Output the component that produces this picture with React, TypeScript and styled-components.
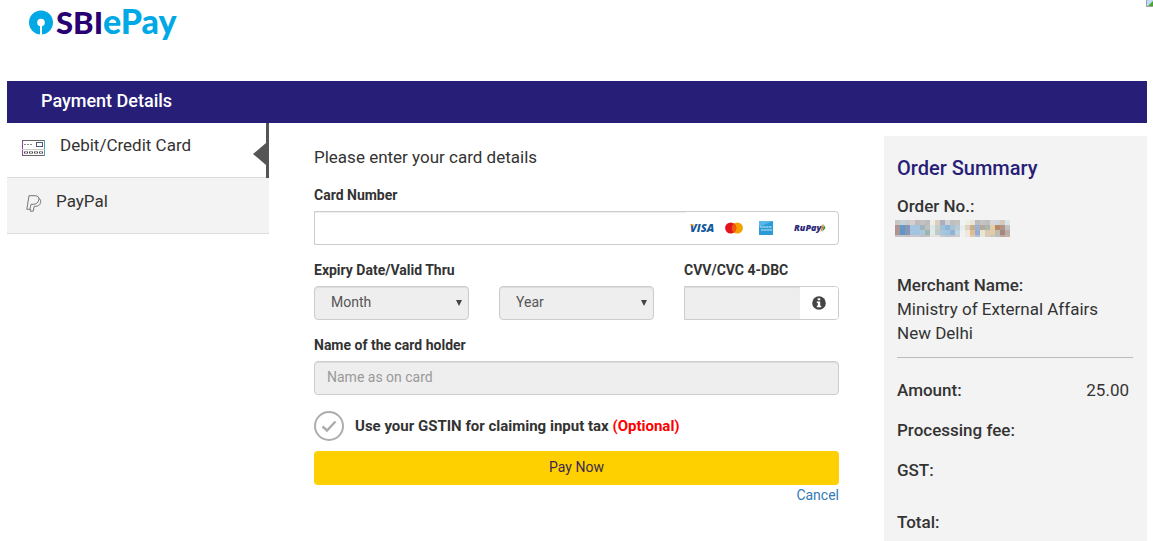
import React from "react";
import styled, { createGlobalStyle } from "styled-components";

const GlobalStyle = createGlobalStyle`
  * { box-sizing: border-box; }
  body {
    margin: 0;
    background: #fff;
    color: #333;
    font-family: Roboto, "Liberation Sans", sans-serif;
    font-size: 14px;
    line-height: 20px;
  }
  button, input, select { font: inherit; }
`;

const Page = styled.div`
  display: flex;
  flex-direction: column;
  min-height: 100vh;
  padding: 0 6px 0 7px;
`;

const Header = styled.header`
  position: relative;
  height: 81px;
  padding: 0 0 0 21px;
`;

const MissingImage = styled.svg`
  position: absolute;
  top: 0;
  right: -6px;
`;

const TitleBar = styled.h1`
  margin: 0;
  padding: 8px 34px 10px;
  background: #271e78;
  color: #fff;
  font-size: 18px;
  line-height: 24px;
  font-weight: 500;
`;

const Columns = styled.main`
  flex: 1;
  display: grid;
  grid-template-columns: minmax(0, 262fr) minmax(0, 525fr) minmax(0, 263fr);
  column-gap: 45px;
`;

const Methods = styled.nav`
  display: flex;
  flex-direction: column;
`;

const Method = styled.a<{ $active?: boolean; $indent: number; $gap: number }>`
  position: relative;
  display: flex;
  align-items: center;
  gap: ${(p) => p.$gap}px;
  height: ${(p) => (p.$active ? 55 : 56)}px;
  padding: 0 0 10px ${(p) => p.$indent}px;
  background: ${(p) => (p.$active ? "#fff" : "#f3f3f3")};
  border-bottom: 1px solid #ddd;
  color: #333;
  font-size: 17px;
  text-decoration: none;

  svg { margin-top: 5px; }

  ${(p) =>
    p.$active &&
    `
    &::before {
      content: "";
      position: absolute;
      top: 0;
      right: 0;
      bottom: -1px;
      width: 3px;
      background: #555;
    }
    &::after {
      content: "";
      position: absolute;
      top: 20px;
      right: 3px;
      border: solid transparent;
      border-width: 11px 13px 11px 0;
      border-right-color: #555;
    }
  `}
`;

const Form = styled.form`
  padding-top: 24px;
`;

const Intro = styled.p`
  margin: 0 0 18px;
  font-size: 17px;
`;

const Field = styled.div`
  display: flex;
  flex-direction: column;
  gap: 6px;
  margin-bottom: 15px;
`;

const FieldRow = styled.div`
  display: grid;
  grid-template-columns: repeat(3, minmax(0, 1fr));
  column-gap: 30px;
  align-items: end;
`;

const Label = styled.label`
  font-weight: 700;
`;

const ControlGroup = styled.div`
  display: flex;
  height: 34px;
  border: 1px solid #ccc;
  border-radius: 0 4px 4px 0;
  overflow: hidden;
`;

const BareInput = styled.input<{ $grey?: boolean }>`
  flex: 1;
  min-width: 0;
  border: 0;
  padding: 6px 12px;
  background: ${(p) => (p.$grey ? "#eee" : "#fff")};
  box-shadow: inset 0 1px 1px rgba(0, 0, 0, 0.075);
  color: #555;
`;

const CardBrands = styled.div`
  display: grid;
  grid-template-columns: 32px 32px 32px 56px;
  align-items: center;
  justify-items: center;
`;

const InfoButton = styled.button`
  display: flex;
  align-items: center;
  justify-content: center;
  width: 38px;
  padding: 0;
  border: 0;
  background: #fff;
`;

const TextInput = styled.input`
  height: 34px;
  padding: 5px 12px 7px;
  border: 1px solid #ccc;
  border-radius: 4px;
  background: #eee;
  box-shadow: inset 0 1px 1px rgba(0, 0, 0, 0.075);
  color: #555;
  &::placeholder { color: #999; opacity: 1; }
`;

const SelectBox = styled.div`
  position: relative;
  display: flex;
  &::after {
    content: "";
    position: absolute;
    top: 14px;
    right: 7px;
    border: solid transparent;
    border-width: 6px 3px 0;
    border-top-color: #444;
    pointer-events: none;
  }
`;

const Select = styled.select`
  appearance: none;
  width: 100%;
  height: 34px;
  padding: 5px 16px 7px;
  border: 1px solid #ccc;
  border-radius: 4px;
  background: #eee;
  box-shadow: inset 0 1px 1px rgba(0, 0, 0, 0.075);
  color: #555;
`;

const GstLabel = styled.label`
  display: flex;
  align-items: center;
  gap: 11px;
  margin: 16px 0 10px;
  font-size: 15px;
  font-weight: 700;
`;

const GstTick = styled.span`
  position: relative;
  display: flex;
  svg { position: absolute; inset: 0; pointer-events: none; }
`;

const GstCheckbox = styled.input`
  appearance: none;
  width: 30px;
  height: 30px;
  margin: 0;
  border: 2px solid #adadad;
  border-radius: 50%;
`;

const Optional = styled.span`
  color: #f00;
`;

const PayButton = styled.button`
  display: block;
  width: 100%;
  height: 34px;
  padding: 5px 12px 7px;
  border: 0;
  border-radius: 4px;
  background: #ffd000;
  color: #3a2a50;
`;

const CancelRow = styled.div`
  text-align: right;
`;

const Cancel = styled.a`
  color: #337ab7;
  text-decoration: none;
`;

const Summary = styled.aside`
  margin-top: 13px;
  padding: 20px 14px 0 13px;
  background: #f3f3f3;
  font-size: 17px;
  line-height: 24px;
`;

const SummaryTitle = styled.h2`
  margin: 0 0 14px;
  color: #271e78;
  font-size: 20px;
  line-height: 24px;
  font-weight: 500;
`;

const Term = styled.div`
  font-weight: 500;
`;

const OrderNumber = styled.svg`
  display: block;
  margin: 2px 0 36px -2px;
`;

const Merchant = styled.div`
  padding-bottom: 12px;
  border-bottom: 1px solid #bbb;
`;

const Amounts = styled.div`
  display: flex;
  flex-direction: column;
  gap: 16px;
  padding: 20px 4px 0 0;
`;

const AmountRow = styled.div<{ $total?: boolean }>`
  display: flex;
  justify-content: space-between;
  margin-top: ${(p) => (p.$total ? 12 : 0)}px;
`;

const Logo = () => (
  <svg width="160" height="52" viewBox="0 0 160 52" role="img" aria-label="SBI ePay">
    <circle cx="13" cy="22.5" r="12" fill="#00a9e5" />
    <circle cx="13" cy="22.5" r="3.800" fill="#fff" />
    <rect x="12" y="24" width="2" height="11" fill="#fff" />
    <g fontFamily="Lato" fontWeight="900">
      <text x="28" y="34" fontSize="31" fill="#280071">SBI</text>
      <text x="75" y="34" fontSize="34" fill="#00a9e5">ePay</text>
    </g>
  </svg>
);

const CardIcon = () => (
  <svg width="23" height="16" viewBox="0 0 23 16" fill="none" aria-hidden="true">
    <rect x="0.5" y="0.5" width="22" height="15" stroke="#666" />
    <path d="M0.5 0v16" stroke="#9440a0" />
    <path d="M22.5 0v16" stroke="#4a9cc0" />
    <path d="M2 4.5h9" stroke="#888" strokeDasharray="2 1" />
    <rect x="14.5" y="2.5" width="6" height="4" stroke="#557" />
    <path d="M0 9.5h23" stroke="#ccc" />
    <path d="M2 12.5h19" stroke="#444" strokeWidth="2" strokeDasharray="4 1" />
    <path d="M3 12.5h17" stroke="#ddd" strokeDasharray="2 3" />
  </svg>
);

const PayPalIcon = () => (
  <svg width="16" height="17" viewBox="0 0 16 17" fill="none" stroke="#777" aria-hidden="true">
    <path d="M3 .7h6c3 0 4.300 1.600 3.800 4.200-.6 3-2.600 4.400-5.600 4.400H5l-1.100 5H.8z" />
    <path d="M13 3.500c1.600.8 2 2.200 1.600 4-.6 2.700-2.400 3.800-5 3.800H8.200l-1 4.900H4.300l.4-2" />
  </svg>
);

const Visa = () => (
  <svg width="30" height="18" viewBox="0 0 30 18" role="img" aria-label="Visa">
    <text x="3" y="13" fontFamily="Open Sans" fontWeight="800" fontStyle="italic" fontSize="11" fill="#15589b">VISA</text>
    <path d="M2 5h4l1 3.500C6 6.800 4.500 5.700 2 5z" fill="#f3a629" />
  </svg>
);

const Mastercard = () => (
  <svg width="18" height="12" viewBox="0 0 18 12" role="img" aria-label="Mastercard">
    <circle cx="12.300" cy="6" r="5.600" fill="#f59e00" />
    <circle cx="5.700" cy="6" r="5.600" fill="#e2131d" />
    <path d="M9 1.500a5.600 5.600 0 0 1 0 9a5.600 5.600 0 0 1 0-9z" fill="#ef5b0c" />
  </svg>
);

const Amex = () => (
  <svg width="14" height="14" viewBox="0 0 14 14" role="img" aria-label="American Express">
    <rect width="14" height="14" fill="#2b9bd8" />
    <path d="M0 0h14L0 6z" fill="#58b7e6" />
    <path d="M1 6h12M2 9h11" stroke="#9fd2ee" strokeWidth="1.300" strokeDasharray="2.500 .4" />
  </svg>
);

const RuPay = () => (
  <svg width="34" height="16" viewBox="0 0 34 16" role="img" aria-label="RuPay">
    <text x="1" y="11" fontFamily="Open Sans" fontWeight="800" fontStyle="italic" fontSize="9" fill="#2d2a7b">RuPay</text>
    <path d="M29 4l2 4-3.500 4z" fill="#f47b20" />
    <path d="M30.500 4l2 4-3.500 4 1.500-4z" fill="#1a9a50" />
  </svg>
);

const InfoIcon = () => (
  <svg width="14" height="14" viewBox="0 0 14 14" aria-hidden="true">
    <circle cx="7" cy="7" r="6.800" fill="#444" />
    <path d="M5.700 2.200h2.500v2H5.700zM4.800 5.500h3.400v4.300h1v1.500H4.800V9.800h1V7h-1z" fill="#fff" />
  </svg>
);

const MOSAIC = [
  ["#c9c4c6", "#c3d0d4", "#cac9cc", "#d8cfca", "#bcbcbe", "#c2c0c0", "#bbbcbe", "#eeeee4", "#dccdbf", "#abafbd", "#d0d1d4", "#bebfc1", "#c6c2c0", "#eef3f3", "#f0eee2", "#e8e4dc", "#b9bcbf", "#c4c2c4", "#c1bfbd", "#d8d6d8", "#d0d5e0", "#d8c8bb", "#dbe7ec"],
  ["#ad9391", "#6498c7", "#8995b4", "#a4c5df", "#a4c5df", "#9fb4bb", "#bcc0bf", "#dce8e6", "#c9cdc8", "#a2bfd6", "#8bb5d9", "#aac3d0", "#b9cbd6", "#e5eff0", "#e3d2c1", "#c9ad8f", "#9eb0cf", "#b5a999", "#a9b6b2", "#e4cea7", "#b78967", "#af9489", "#c2c3c0"],
  ["#ad9391", "#5e96c7", "#8995b4", "#a4c5df", "#a4c5df", "#a9c8dc", "#9fb3b3", "#dcebe8", "#c2c7c8", "#a7c6dc", "#a0c4df", "#8fb5d2", "#c0d5df", "#f0f2f2", "#f0e7dc", "#dfbd91", "#92aed5", "#e9e5cf", "#d8cdb4", "#e4cba6", "#bbbcb4", "#a68780", "#bdaea5"],
  ["#c5c0c1", "#c3c4c6", "#c3c0c1", "#c8c8cb", "#c5c7ca", "#bec0c3", "#c4c2c1", "#dce4e0", "#e5dfd6", "#c7cbd0", "#bac5d0", "#c7c5c4", "#c9cdd0", "#f0f2f2", "#ebe8df", "#dfc9ab", "#b5bfd3", "#eae8dc", "#d5cdbd", "#c7c6c0", "#bfbeb8", "#bda69d", "#c2b2a9"],
];

const App = () => (
  <>
    <GlobalStyle />
    <Page>
      <Header>
        <Logo />
        <MissingImage width="7" height="7" viewBox="0 0 7 7" aria-hidden="true">
          <path d="M0 0h7v7H0z" fill="#9aa5b0" />
          <path d="M1 0h6v6H1z" fill="#c3d9f3" />
          <path d="M2 6l5-5v5z" fill="#4aa52e" />
        </MissingImage>
      </Header>
      <TitleBar>Payment Details</TitleBar>
      <Columns>
        <Methods>
          <Method href="#card" $active $indent={15} $gap={15}>
            <CardIcon />
            Debit/Credit Card
          </Method>
          <Method href="#paypal" $indent={19} $gap={14}>
            <PayPalIcon />
            PayPal
          </Method>
        </Methods>

        <Form>
          <Intro>Please enter your card details</Intro>
          <Field>
            <Label htmlFor="number">Card Number</Label>
            <ControlGroup>
              <BareInput id="number" />
              <CardBrands>
                <Visa />
                <Mastercard />
                <Amex />
                <RuPay />
              </CardBrands>
            </ControlGroup>
          </Field>
          <FieldRow>
            <Field>
              <Label htmlFor="month">Expiry Date/Valid Thru</Label>
              <SelectBox>
                <Select id="month">
                  <option>Month</option>
                </Select>
              </SelectBox>
            </Field>
            <Field>
              <SelectBox>
                <Select aria-label="Year">
                  <option>Year</option>
                </Select>
              </SelectBox>
            </Field>
            <Field>
              <Label htmlFor="cvv">CVV/CVC 4-DBC</Label>
              <ControlGroup>
                <BareInput id="cvv" $grey />
                <InfoButton type="button" aria-label="About CVV">
                  <InfoIcon />
                </InfoButton>
              </ControlGroup>
            </Field>
          </FieldRow>
          <Field>
            <Label htmlFor="holder">Name of the card holder</Label>
            <TextInput id="holder" placeholder="Name as on card" />
          </Field>
          <GstLabel>
            <GstTick>
              <GstCheckbox type="checkbox" />
              <svg width="30" height="30" viewBox="0 0 30 30" fill="none">
                <path d="M8.500 15.500l4.500 4L21.500 10.500" stroke="#adadad" strokeWidth="2.500" />
              </svg>
            </GstTick>
            <span>
              Use your GSTIN for claiming input tax <Optional>(Optional)</Optional>
            </span>
          </GstLabel>
          <PayButton type="button">Pay Now</PayButton>
          <CancelRow>
            <Cancel href="#cancel">Cancel</Cancel>
          </CancelRow>
        </Form>

        <Summary>
          <SummaryTitle>Order Summary</SummaryTitle>
          <Term>Order No.:</Term>
          <OrderNumber width="115" height="17" viewBox="0 0 115 17" shapeRendering="crispEdges" aria-hidden="true">
            {MOSAIC.map((row, y) =>
              row.map((fill, x) => (
                <rect key={`${x}-${y}`} x={x * 5} y={y * 5} width="5" height="5" fill={fill} />
              ))
            )}
          </OrderNumber>
          <Merchant>
            <Term>Merchant Name:</Term>
            <div>Ministry of External Affairs</div>
            <div>New Delhi</div>
          </Merchant>
          <Amounts>
            <AmountRow>
              <Term>Amount:</Term>
              <span>25.00</span>
            </AmountRow>
            <AmountRow>
              <Term>Processing fee:</Term>
            </AmountRow>
            <AmountRow>
              <Term>GST:</Term>
            </AmountRow>
            <AmountRow $total>
              <Term>Total:</Term>
            </AmountRow>
          </Amounts>
        </Summary>
      </Columns>
    </Page>
  </>
);

export default App;
